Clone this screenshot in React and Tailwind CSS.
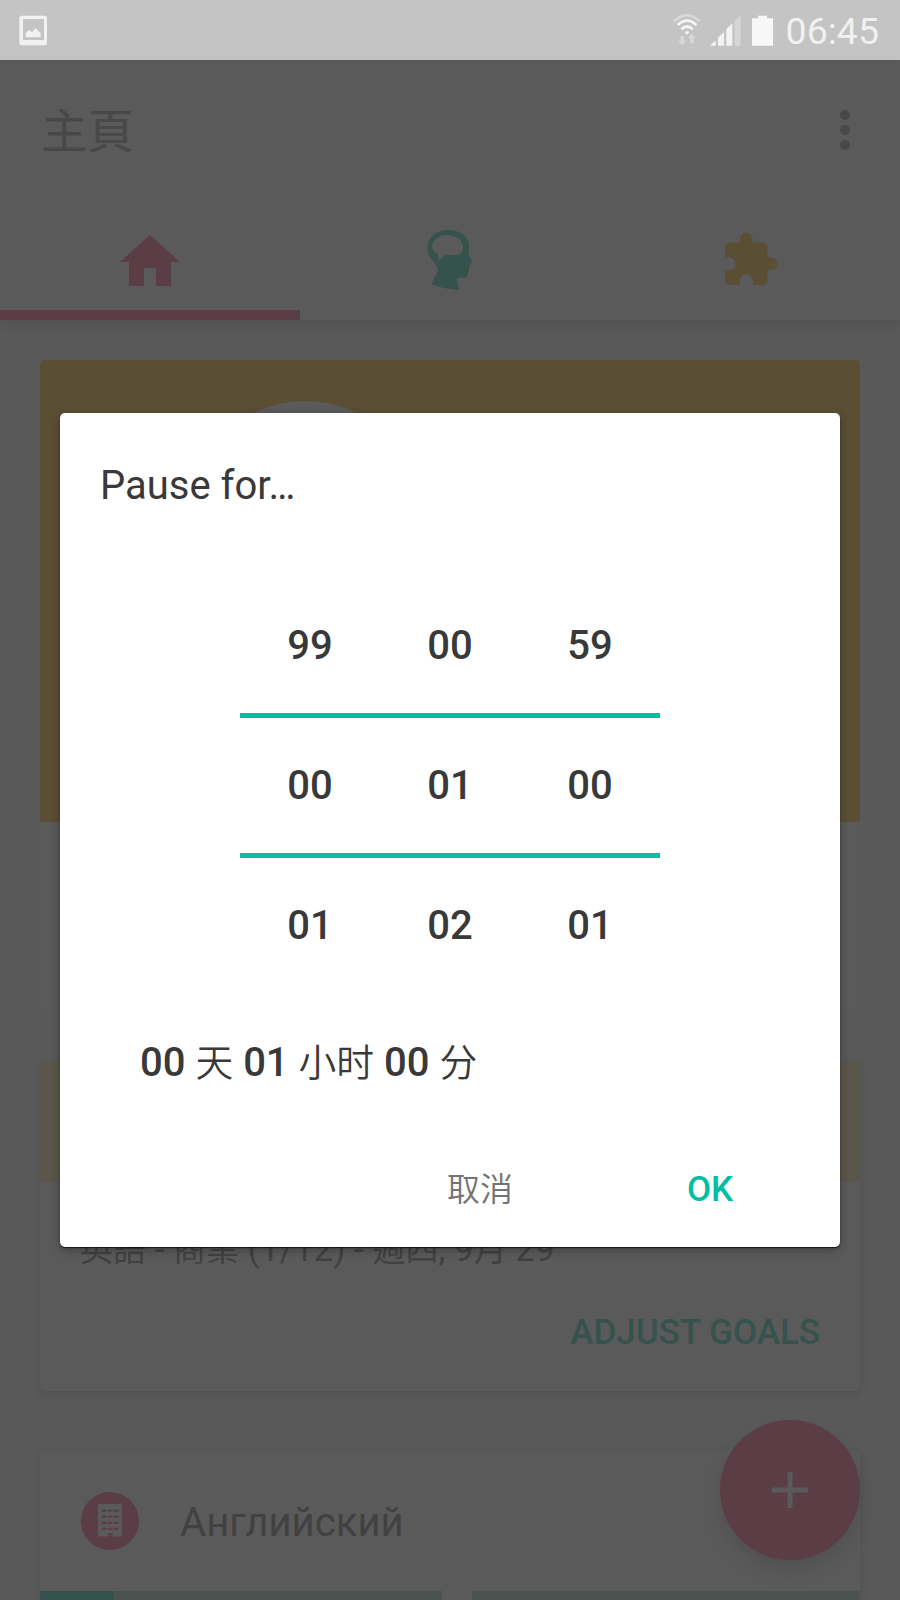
import React, { useState } from 'react';

const columns = [
  { id: 'days', values: ['99', '00', '01'] },
  { id: 'hours', values: ['00', '01', '02'] },
  { id: 'minutes', values: ['59', '00', '01'] }
];

const StatusBar = () => (
  <div className="h-[60px] shrink-0 bg-[#c4c4c4] flex items-center justify-between pl-[18px] pr-[21px]">
    <svg viewBox="54 43 90 93" className="w-[30px] h-[31px]">
      <path
        fill="#f1f1f1"
        fillRule="evenodd"
        d="M65 45H134Q141 45 141 52V127Q141 134 134 134H65Q58 134 58 127V52Q58 45 65 45ZM69 55V118H132V55ZM77 110V98L88 87L96 95L107 83L122 98V110Z"
      />
    </svg>
    <div className="flex items-center">
      <svg viewBox="96 42 84 95" className="w-[28px] h-[31.67px]">
        <g fill="none" strokeWidth="8">
          <path d="M99 64Q138 28 177 64" stroke="#d8d8d8" />
          <path d="M110 75Q138 49 166 75" stroke="#f6f6f6" />
          <path d="M121 88Q138 71 155 88" stroke="#f6f6f6" />
        </g>
        <path d="M131 97Q138 90 145 97L138 104Z" fill="#f6f6f6" />
        <path d="M118 108H129V122H136L123 136L110 122H118ZM147 130V115H140L152 101L165 115H158V130Z" fill="#d8d8d8" />
      </svg>
      <svg viewBox="208 43 93 93" className="w-[31px] h-[31px] ml-[9px]">
        <path d="M208 135L225 119V135ZM232 135V111L250 94V135ZM257 135V86L275 68V135Z" fill="#f3f3f3" />
        <path d="M282 135V61L300 44V135Z" fill="#d6d6d6" />
      </svg>
      <svg viewBox="336 43 63 93" className="w-[21px] h-[31px] ml-[11px]">
        <path d="M336 53H354V45H381V53H399V135H336Z" fill="#f7f7f7" />
      </svg>
      <span className="ml-[13px] mt-[3px] text-[37.5px] leading-none text-[#f1f1f1]">06:45</span>
    </div>
  </div>
);

const TabBar = () => (
  <div className="h-[120px] grid grid-cols-3">
    <div className="flex items-center justify-center border-b-10 border-[#5a3d45] pt-[13px]">
      <svg viewBox="0 0 24 24" className="w-[72px] h-[72px] fill-[#5a3d45]">
        <path d="M10 20v-6h4v6h5v-8h3L12 3 2 12h3v8z" />
      </svg>
    </div>
    <div className="flex items-center justify-center">
      <svg viewBox="60 60 180 180" className="w-[60px] h-[60px] fill-[#36524d]">
        <path
          fillRule="evenodd"
          d="M145 60C180 60 208 80 208 110C208 120 203 128 206 135L216 153Q218 157 209 165C208 178 204 190 202 198Q200 202 194 202L176 203Q169 203 170 208L178 240C150 238 115 232 94 222C104 204 113 192 113 178C112 158 82 146 82 114C84 80 112 60 145 60ZM145 75C172 77 189 92 189 114C188 128 176 137 160 136C150 135 140 134 132 138C126 142 122 149 118 151Q115 152 116 146L116 137Q116 134 112 132C101 126 96 118 96 108C98 88 120 74 145 75Z"
        />
      </svg>
    </div>
    <div className="flex items-center justify-center">
      <svg viewBox="0 0 24 24" className="w-[60px] h-[60px] fill-[#5a4e34]">
        <path d="M20.5 11H19V7c0-1.1-.9-2-2-2h-4V3.5C13 2.12 11.88 1 10.5 1S8 2.12 8 3.5V5H4c-1.1 0-1.99.9-1.99 2v3.8H3.5c1.49 0 2.7 1.21 2.7 2.7s-1.21 2.7-2.7 2.7H2V20c0 1.1.9 2 2 2h3.8v-1.5c0-1.49 1.21-2.7 2.7-2.7 1.49 0 2.7 1.21 2.7 2.7V22H17c1.1 0 2-.9 2-2v-4h1.5c1.38 0 2.5-1.12 2.5-2.5S21.88 11 20.5 11z" />
      </svg>
    </div>
  </div>
);

const Header = () => (
  <header className="shrink-0 bg-[#5a5a5a] shadow-[0_4px_10px_rgba(0,0,0,0.09)]">
    <div className="h-[140px] flex items-center justify-between pl-[41px] pr-[25px]">
      <h1 className="pt-[5px] text-[46.6px] leading-none text-[#484848]">主頁</h1>
      <svg viewBox="0 0 24 24" className="w-[60px] h-[60px] fill-[#484848]">
        <circle cx="12" cy="6" r="2" />
        <circle cx="12" cy="12" r="2" />
        <circle cx="12" cy="18" r="2" />
      </svg>
    </div>
    <TabBar />
  </header>
);

const PauseDialog = ({ onClose }) => (
  <div className="absolute inset-x-[60px] top-[413px] h-[834px] bg-white rounded-[5px] text-[#393939] shadow-[0_1px_1px_rgba(0,0,0,0.7),0_3px_10px_rgba(0,0,0,0.3)]">
    <h2 className="pt-[52px] px-10 text-[40px] leading-[42px]">Pause for…</h2>

    <div className="mt-[72px] mx-auto w-[420px] grid grid-cols-3 text-[40px] font-medium text-center">
      {columns.map(({ id, values }) => (
        <div key={id}>
          <div className="leading-[134px]">{values[0]}</div>
          <div className="border-y-5 border-[#00bfa5] leading-[135px]">{values[1]}</div>
          <div className="leading-[136px]">{values[2]}</div>
        </div>
      ))}
    </div>

    <p className="mt-[48px] pl-20 h-[42px] text-[40px] leading-[42px] whitespace-nowrap">
      <b className="font-medium">00</b> <span className="text-[37.8px] font-[350]">天</span>{' '}
      <b className="font-medium">01</b> <span className="text-[37.8px] font-[350]">小时</span>{' '}
      <b className="font-medium">00</b> <span className="text-[37.8px] font-[350]">分</span>
    </p>

    <div className="mt-[65px] flex justify-end gap-[10px] pr-5 leading-[80px]">
      <button onClick={onClose} className="w-[220px] pt-px text-[33px] font-[350] text-[#737373]">取消</button>
      <button onClick={onClose} className="w-[220px] text-[35px] font-medium text-[#00bfa5]">OK</button>
    </div>
  </div>
);

const App = () => {
  const [isOpen, setIsOpen] = useState(true);

  return (
    <div className="relative w-[900px] h-[1600px] overflow-hidden bg-[#595959] flex flex-col font-['Roboto','Noto_Sans_CJK_SC',sans-serif]">
      <StatusBar />
      <Header />

      <main className="px-10 pt-10">
        <section className="h-[652px] rounded-[5px] overflow-hidden bg-[#5a5a5a]">
          <div className="h-[462px] bg-[#5a4e34] pt-[41px] pl-[149px]">
            <div className="size-[232px] rounded-full bg-[#5a5a5a]" />
          </div>
        </section>

        <section className="mt-[50px] h-[329px] rounded-[5px] bg-[#5a5a5a] shadow-[0_3px_8px_rgba(0,0,0,0.1)]">
          <div className="h-[120px] rounded-t-[5px] bg-[#5a564b]" />
          <p className="mt-[47px] pl-10 h-[42px] text-[35px] leading-[42px] text-[#414141] whitespace-nowrap font-['Roboto','Noto_Sans_CJK_TC',sans-serif]">
            <span className="text-[33px]">英語</span> - <span className="text-[33px]">商業</span> (1/12) -{' '}
            <span className="text-[33px]">週四</span>, 9<span className="text-[33px]">月</span> 29
          </p>
          <div className="mt-[41px] pr-10 text-right">
            <button onClick={() => setIsOpen(true)} className="text-[35px] leading-[42px] font-medium text-[#36524d]">
              ADJUST GOALS
            </button>
          </div>
        </section>

        <section className="mt-[60px] h-[200px] rounded-[5px] bg-[#5a5a5a] shadow-[0_3px_8px_rgba(0,0,0,0.1)]">
          <div className="h-[139.5px] flex items-center pl-[41px]">
            <div className="size-[58px] rounded-full bg-[#5a3d45] flex items-center justify-center">
              <svg viewBox="0 0 73 98" className="w-[24.3px] h-[32.6px]">
                <path d="M0 0H73V98H43V87H30V98H0Z" fill="#5a5a5a" />
                <path d="M12 20H62M12 38H62M12 57H62M12 75H62" stroke="#5a3d45" strokeWidth="7" strokeDasharray="14 4" />
              </svg>
            </div>
            <span className="ml-[41px] mt-[5px] text-[40.1px] leading-none text-[#414141]">Английский</span>
          </div>
          <div className="h-[60px] flex gap-[30px]">
            <div className="w-[402px] bg-[#4a5350]">
              <div className="w-[74px] h-full bg-[#36524d]" />
            </div>
            <div className="flex-1 bg-[#4a5350]" />
          </div>
        </section>
      </main>

      <button
        onClick={() => setIsOpen(true)}
        className="absolute right-10 bottom-10 size-[140px] rounded-full bg-[#5a3d45] shadow-[0_10px_20px_rgba(0,0,0,0.1)] flex items-center justify-center"
      >
        <svg viewBox="0 0 36 36" className="w-9 h-9">
          <path d="M18 0V36M0 18H36" stroke="#5a5a5a" strokeWidth="5" />
        </svg>
      </button>

      {isOpen && <PauseDialog onClose={() => setIsOpen(false)} />}
    </div>
  );
};

export default App;
